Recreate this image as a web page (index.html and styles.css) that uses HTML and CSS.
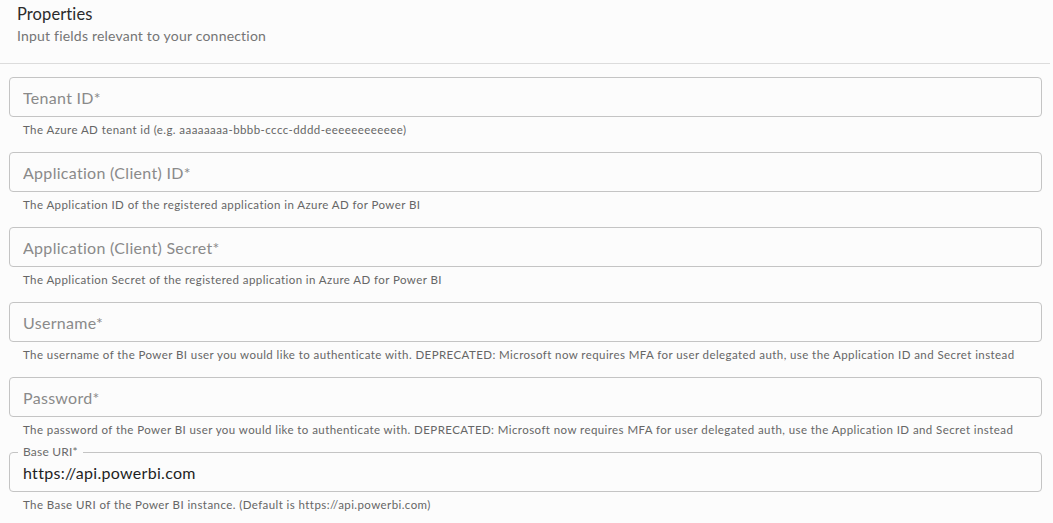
FILE: index.html
```html
<!DOCTYPE html>
<html lang="en">
<head>
    <meta charset="UTF-8">
    <meta name="viewport" content="width=device-width, initial-scale=1.0">
    <title>Properties</title>
    <link rel="stylesheet" href="styles.css">
</head>
<body>
    <div class="header">
        <h2>Properties</h2>
        <p class="subtitle">Input fields relevant to your connection</p>
    </div>
    <hr class="divider">

    <div class="fields">
        <div class="field">
            <input class="input" type="text" placeholder="Tenant ID*">
            <p class="helper">The Azure AD tenant id (e.g. aaaaaaaa-bbbb-cccc-dddd-eeeeeeeeeeee)</p>
        </div>
        <div class="field">
            <input class="input" type="text" placeholder="Application (Client) ID*">
            <p class="helper">The Application ID of the registered application in Azure AD for Power BI</p>
        </div>
        <div class="field">
            <input class="input" type="text" placeholder="Application (Client) Secret*">
            <p class="helper">The Application Secret of the registered application in Azure AD for Power BI</p>
        </div>
        <div class="field">
            <input class="input" type="text" placeholder="Username*">
            <p class="helper">The username of the Power BI user you would like to authenticate with. DEPRECATED: Microsoft now requires MFA for user delegated auth, use the Application ID and Secret instead</p>
        </div>
        <div class="field">
            <input class="input" type="password" placeholder="Password*">
            <p class="helper">The password of the Power BI user you would like to authenticate with. DEPRECATED: Microsoft now requires MFA for user delegated auth, use the Application ID and Secret instead</p>
        </div>
        <div class="field">
            <div class="filled">
                <span class="float-label">Base URI*</span>
                <input class="input value" type="text" value="https://api.powerbi.com">
            </div>
            <p class="helper">The Base URI of the Power BI instance. (Default is https://api.powerbi.com)</p>
        </div>
    </div>
</body>
</html>
```

FILE: styles.css
```css
:root {
    --fundal: #fcfcfc;
    --border: #c4c4c4;
    --text: #333333;
    --gri: #757575;
}

body {
    font-family: 'Lato', 'Liberation Sans', sans-serif;
    background: var(--fundal);
    color: var(--text);
    margin: 0;
    padding: 0;
}

.header {
    padding: 3px 17px 0;
}

.header h2 {
    margin: 0;
    font-size: 16.5px;
    font-weight: 400;
    line-height: 22px;
    letter-spacing: 0.1px;
    color: #2b2b2b;
}

.subtitle {
    margin: 1px 0 0;
    font-size: 14px;
    line-height: 20px;
    letter-spacing: 0.2px;
    color: var(--gri);
}

.divider {
    border: none;
    border-top: 1px solid #dcdcdc;
    margin: 17px 3px 0 0;
}

.fields {
    display: flex;
    flex-direction: column;
    gap: 12px;
    padding: 13px 11px 0 9px;
}

.field {
    display: flex;
    flex-direction: column;
}

.input {
    box-sizing: border-box;
    width: 100%;
    height: 40px;
    padding: 0 13px;
    border: 1px solid var(--border);
    border-radius: 4px;
    background: transparent;
    font-family: inherit;
    font-size: 16px;
    letter-spacing: 0.3px;
    color: #222;
    outline: none;
}

.input::placeholder {
    color: #8a8a8a;
}

.filled {
    position: relative;
}

.float-label {
    position: absolute;
    left: 9px;
    top: -8px;
    padding: 0 5px;
    background: var(--fundal);
    font-size: 12px;
    line-height: 15px;
    letter-spacing: 0.2px;
    color: #6b6b6b;
}

.value {
    color: #1f1f1f;
}

.helper {
    margin: 3px 0 0 14px;
    font-size: 11.5px;
    line-height: 20px;
    letter-spacing: 0.42px;
    color: #666;
}
```
